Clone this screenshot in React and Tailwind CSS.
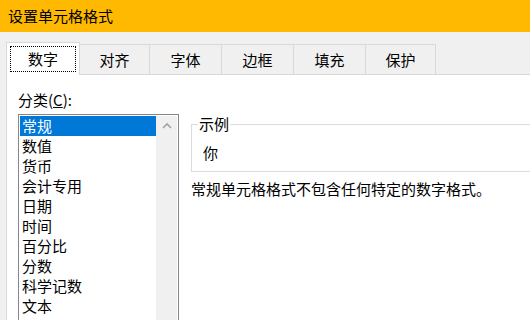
import React from "react";

const tabs = [
  { label: "对齐", w: "w-[70px]" },
  { label: "字体", w: "w-[72px]" },
  { label: "边框", w: "w-[72px]" },
  { label: "填充", w: "w-[72px]" },
  { label: "保护", w: "w-[70px]" },
];

const items = ["常规", "数值", "货币", "会计专用", "日期", "时间", "百分比", "分数", "科学记数", "文本"];

export default function App() {
  return (
    <div
      className="w-[530px] h-[320px] overflow-hidden bg-[#f0f0f0] text-black flex flex-col text-[15px] leading-[20px]"
      style={{ fontFamily: '"Microsoft YaHei UI", "Noto Sans CJK SC", "Noto Sans", sans-serif' }}
    >
      <div className="h-[32px] shrink-0 bg-[#ffb900] pl-[8px] flex items-center">设置单元格格式</div>
      <div className="flex items-end pt-[10px] pl-[6px] shrink-0">
        <div className="w-[74px] h-[33px] bg-white border-l border-t border-r border-[#d9d9d9] pt-[3px] px-[3px] pb-[3px] flex">
          <div className="flex-1 border border-dotted border-black flex items-center justify-center">数字</div>
        </div>
        {tabs.map((t) => (
          <div
            key={t.label}
            className={`${t.w} h-[31px] border-t border-r border-b border-[#d9d9d9] flex items-center justify-center`}
          >
            {t.label}
          </div>
        ))}
        <div className="flex-1 border-b border-[#d9d9d9]" />
      </div>
      <div className="flex-1 bg-white ml-[6px] border-l border-[#d9d9d9] pl-[11px] pt-[15px]">
        <div className="leading-[20px] h-[24px]">
          分类(<span className="underline">C</span>):
        </div>
        <div className="flex gap-[12px]">
          <div className="w-[161px] h-[220px] shrink-0 border border-[#828790] p-[1px] flex">
            <div className="w-[136px] flex flex-col">
              {items.map((it, i) => (
                <div
                  key={it}
                  className={`h-[20px] px-[2px] leading-[20px] ${i === 0 ? "bg-[#0078d7] text-white" : ""}`}
                >
                  {it}
                </div>
              ))}
            </div>
            <div className="w-[21px] bg-[#f0f0f0] flex justify-center pt-[6px]">
              <svg width="10" height="8" viewBox="0 0 10 8">
                <path d="M1 6 L5 2 L9 6" fill="none" stroke="#a3a3a3" strokeWidth="1.6" />
              </svg>
            </div>
          </div>
          <div className="flex-1 flex flex-col pt-[2px]">
            <fieldset className="border border-[#dcdcdc] h-[56px] pl-[11px] pr-0 mr-[-20px]">
              <legend className="px-[1px] ml-[-5px] leading-[16px]">示例</legend>
              <div className="pt-[11px] leading-[20px]">你</div>
            </fieldset>
            <div className="pt-[7px] leading-[20px] whitespace-nowrap">常规单元格格式不包含任何特定的数字格式。</div>
          </div>
        </div>
      </div>
    </div>
  );
}
